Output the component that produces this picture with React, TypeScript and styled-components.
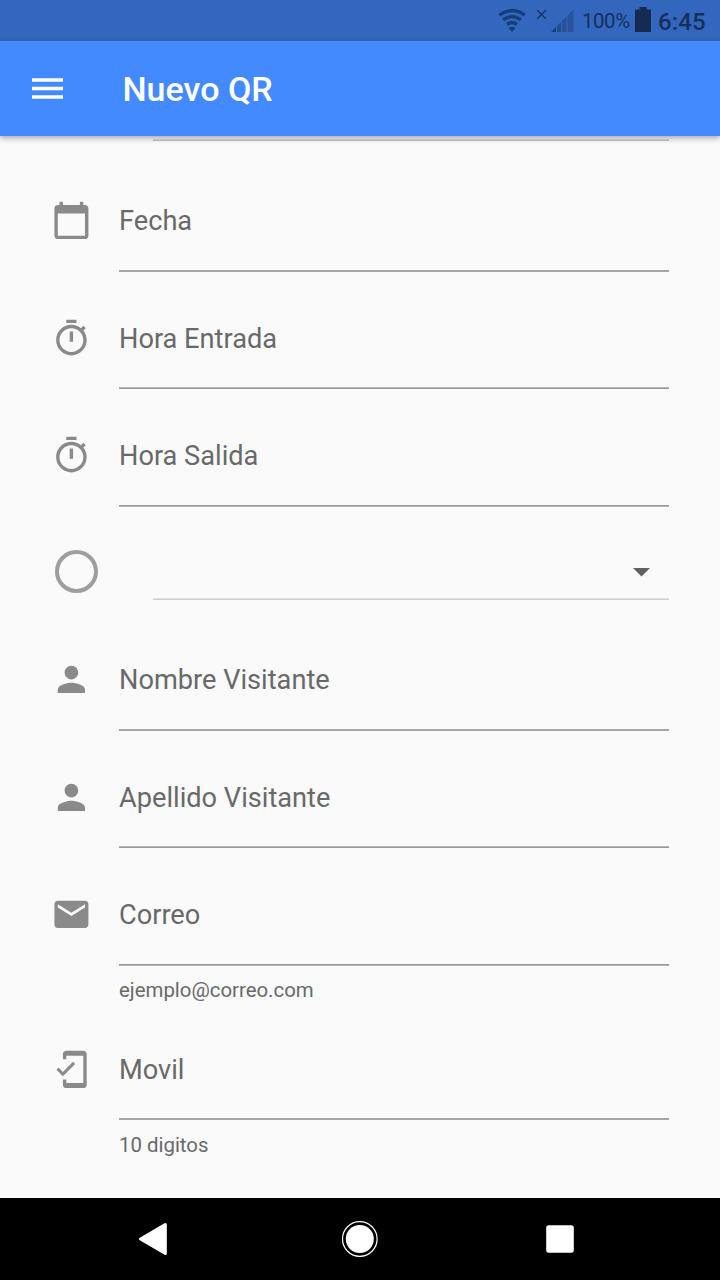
import React from "react";
import styled, { createGlobalStyle } from "styled-components";

const GlobalStyle = createGlobalStyle`
  * { box-sizing: border-box; }
  body { margin: 0; background: #fafafa; font-family: Roboto, "Liberation Sans", sans-serif; }
`;

const Screen = styled.div`
  display: flex;
  flex-direction: column;
  width: 720px;
  height: 1280px;
  overflow: hidden;
  background: #fafafa;
`;

const StatusBar = styled.header`
  display: flex;
  flex: none;
  height: 41px;
  padding-left: 498px;
  background: #3367bd;
  color: #15305c;
`;

const StatusIcons = styled.svg`
  display: block;
  flex: none;
  width: 84px;
  height: 41px;
`;

const BatteryLevel = styled.span`
  width: 53px;
  font-size: 20.4px;
  line-height: 43px;
  letter-spacing: -0.4px;
  white-space: nowrap;
`;

const BatteryIcon = styled.svg`
  display: block;
  flex: none;
  width: 16px;
  height: 41px;
`;

const Clock = styled.span`
  margin-left: 7px;
  font-size: 24px;
  font-weight: 500;
  line-height: 45px;
  height: 41px;
  letter-spacing: 0.1px;
`;

const AppBar = styled.nav`
  position: relative;
  display: flex;
  flex: none;
  align-items: center;
  height: 95px;
  padding-left: 32px;
  background: #448aff;
  color: #fff;
  box-shadow: 0 2px 6px rgba(0, 0, 0, 0.35);
`;

const MenuButton = styled.button`
  display: block;
  width: 31px;
  height: 22px;
  padding: 0;
  border: 0;
  background: none;
  svg { display: block; }
`;

const Title = styled.h1`
  margin: 0 0 0 59.5px;
  font-size: 34px;
  font-weight: 500;
  line-height: 40px;
`;

const Form = styled.main`
  flex: 1;
  min-height: 0;
  padding: 3px 51px 0;
  overflow: hidden;
`;

const Divider = styled.div`
  height: 2px;
  margin: 0 0 59px 102px;
  background: linear-gradient(#dedede 50%, #c4c4c4 50%);
`;

const Row = styled.div<{ $height: number }>`
  display: flex;
  height: ${(p) => p.$height}px;
`;

const IconSlot = styled.div`
  flex: none;
  width: 68px;
  svg { display: block; width: 41px; height: 41px; fill: #8a8a8a; }
`;

const Field = styled.label`
  flex: 1;
  display: flex;
  flex-direction: column;
`;

const Label = styled.span<{ $line: number }>`
  height: ${(p) => p.$line}px;
  color: #696969;
  font-size: 27.2px;
  line-height: 43px;
`;

const Underline = styled.div<{ $top: string; $bottom: string }>`
  height: 2px;
  background: linear-gradient(${(p) => p.$top} 50%, ${(p) => p.$bottom} 50%);
`;

const Hint = styled.span<{ $gap: number }>`
  margin-top: ${(p) => p.$gap}px;
  color: #696969;
  font-size: 20.4px;
  line-height: 26px;
`;

const SelectRow = styled.div`
  display: flex;
  height: 107px;
`;

const Radio = styled.span`
  flex: none;
  width: 43px;
  height: 43px;
  margin: -2px 55px 0 4px;
  border: 4px solid #9e9e9e;
  border-radius: 50%;
`;

const Select = styled.div`
  display: flex;
  flex: 1;
  justify-content: flex-end;
  height: 48px;
  padding: 16px 19px 0 0;
  background: linear-gradient(#e2e2e2, #e2e2e2) 0 46px / 100% 1px no-repeat;
  border-bottom: 1px solid #cecece;
`;

const NavBar = styled.footer`
  display: flex;
  flex: none;
  height: 82px;
  background: #000;
  svg { display: block; }
`;

const icons = {
  calendar:
    "M20 3h-1V1h-2v2H7V1H5v2H4c-1.1 0-2 .9-2 2v16c0 1.1.9 2 2 2h16c1.1 0 2-.9 2-2V5c0-1.1-.9-2-2-2zm0 18H4V8h16v13z",
  timer:
    "M15 1H9v2h6V1zm-4 13h2V8h-2v6zm8.03-6.61l1.42-1.42c-.43-.51-.9-.99-1.41-1.41l-1.42 1.42C16.07 4.74 14.12 4 12 4c-4.97 0-9 4.03-9 9s4.02 9 9 9 9-4.03 9-9c0-2.12-.74-4.07-1.97-5.61zM12 20c-3.87 0-7-3.13-7-7s3.13-7 7-7 7 3.13 7 7-3.13 7-7 7z",
  person:
    "M12 12c2.21 0 4-1.79 4-4s-1.79-4-4-4-4 1.79-4 4 1.79 4 4 4zm0 2c-2.67 0-8 1.34-8 4v2h16v-2c0-2.66-5.33-4-8-4z",
  mail:
    "M20 4H4c-1.1 0-1.99.9-1.99 2L2 18c0 1.1.9 2 2 2h16c1.1 0 2-.9 2-2V6c0-1.1-.9-2-2-2zm0 4l-8 5-8-5V6l8 5 8-5v2z",
  mobile:
    "M19 1H9c-1.1 0-2 .9-2 2v3h2V4h10v16H9v-2H7v3c0 1.1.9 2 2 2h10c1.1 0 2-.9 2-2V3c0-1.1-.9-2-2-2zM7.01 13.47l-2.55-2.55-1.27 1.27L7 16l7.19-7.19-1.27-1.27z",
};

interface FieldSpec {
  icon: keyof typeof icons;
  label: string;
  height: number;
  line: number;
  top: string;
  bottom: string;
  hint?: string;
  hintGap?: number;
}

const timeFields: FieldSpec[] = [
  { icon: "calendar", label: "Fecha", height: 118, line: 70, top: "#a6a6a6", bottom: "#a6a6a6" },
  { icon: "timer", label: "Hora Entrada", height: 117, line: 69, top: "#b4b4b4", bottom: "#989898" },
  { icon: "timer", label: "Hora Salida", height: 117, line: 70, top: "#989898", bottom: "#b4b4b4" },
];

const visitorFields: FieldSpec[] = [
  { icon: "person", label: "Nombre Visitante", height: 118, line: 70, top: "#a6a6a6", bottom: "#a6a6a6" },
  { icon: "person", label: "Apellido Visitante", height: 117, line: 69, top: "#b4b4b4", bottom: "#989898" },
  { icon: "mail", label: "Correo", height: 155, line: 70, top: "#989898", bottom: "#b4b4b4", hint: "ejemplo@correo.com", hintGap: 11 },
  { icon: "mobile", label: "Movil", height: 149, line: 69, top: "#a6a6a6", bottom: "#a6a6a6", hint: "10 digitos", hintGap: 12 },
];

function FormRow({ icon, label, height, line, top, bottom, hint, hintGap = 12 }: FieldSpec) {
  return (
    <Row $height={height}>
      <IconSlot>
        <svg viewBox="0 0 24.12 24.12"><path d={icons[icon]} /></svg>
      </IconSlot>
      <Field>
        <Label $line={line}>{label}</Label>
        <Underline $top={top} $bottom={bottom} />
        {hint && <Hint $gap={hintGap}>{hint}</Hint>}
      </Field>
    </Row>
  );
}

export default function App() {
  return (
    <>
      <GlobalStyle />
      <Screen>
        <StatusBar>
          <StatusIcons viewBox="0 0 84 41">
            <g fill="none" stroke="#173e7c" strokeWidth="3.4">
              <path d="M1.2 15.2Q14 6 26.800 15.2" />
              <path d="M5.2 20Q14 13.200 22.800 20" />
              <path d="M9 24.600Q14 20.600 19 24.600" />
            </g>
            <path d="M10.600 28.200Q14 25.400 17.400 28.200L14 32z" fill="#173e7c" />
            <path d="M39.200 10.200l8.600 8.600M47.800 10.200l-8.600 8.600" stroke="#1c3566" strokeWidth="1.500" />
            <path d="M53 32l5-5v5z" fill="#1b4080" />
            <path d="M59 26l4-4v10h-4z" fill="#234c91" />
            <path d="M64 21l4.500-4.500V32H64zM69.500 15.500L75.500 9.500V32h-6z" fill="#28529b" />
          </StatusIcons>
          <BatteryLevel>100%</BatteryLevel>
          <BatteryIcon viewBox="0 0 16 41">
            <path d="M4.500 7h7v2.500H16V32H0V9.500H4.500z" fill="#172a50" />
          </BatteryIcon>
          <Clock>6:45</Clock>
        </StatusBar>
        <AppBar>
          <MenuButton aria-label="Menu">
            <svg width="31" height="22" viewBox="0 0 31 22" fill="#fff">
              <path d="M0 0.300h31v3.500H0zM0 8.800h31v3.500H0zM0 17.300h31v3.500H0z" />
            </svg>
          </MenuButton>
          <Title>Nuevo QR</Title>
        </AppBar>
        <Form>
          <Divider />
          {timeFields.map((f) => <FormRow key={f.label} {...f} />)}
          <SelectRow>
            <Radio />
            <Select>
              <svg width="17" height="9" viewBox="0 0 17 9"><path d="M0 0h17L8.500 8.500z" fill="#616161" /></svg>
            </Select>
          </SelectRow>
          {visitorFields.map((f) => <FormRow key={f.label} {...f} />)}
        </Form>
        <NavBar>
          <svg width="720" height="82" viewBox="0 0 720 82" fill="#fff">
            <path d="M140.500 41L165.300 26.500V55.500z" stroke="#fff" strokeWidth="3" strokeLinejoin="round" />
            <circle cx="359.800" cy="41" r="14" />
            <circle cx="359.800" cy="41" r="17.300" fill="none" stroke="#fff" strokeWidth="1.200" />
            <rect x="546.200" y="27.200" width="27.600" height="27.600" rx="2.500" />
          </svg>
        </NavBar>
      </Screen>
    </>
  );
}
